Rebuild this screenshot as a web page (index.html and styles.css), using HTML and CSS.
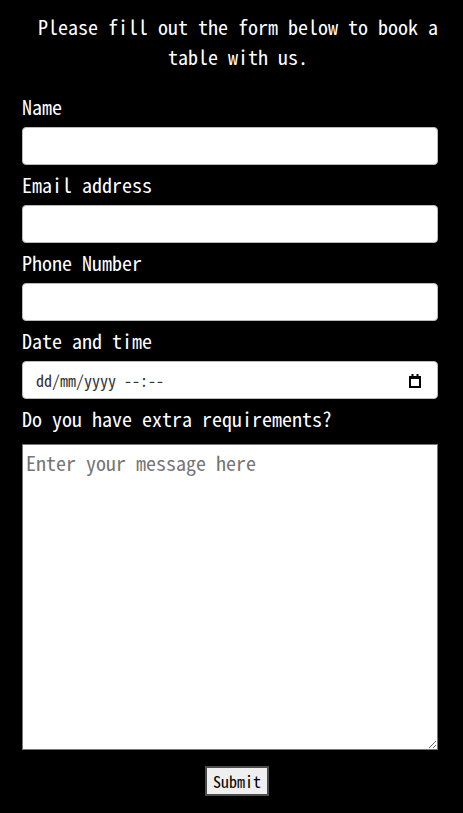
FILE: index.html
```html
<!DOCTYPE html>
<html lang="en">
<head>
<meta charset="utf-8">
<title>Book a table</title>
<link rel="stylesheet" href="styles.css">
</head>
<body>
<main class="page">
  <p class="intro">Please fill out the form below to book a table with us.</p>
  <form class="booking">
    <label class="field-label" for="name">Name</label>
    <input class="field" type="text" id="name">
    <label class="field-label" for="email">Email address</label>
    <input class="field" type="email" id="email">
    <label class="field-label" for="phone">Phone Number</label>
    <input class="field" type="tel" id="phone">
    <label class="field-label" for="when">Date and time</label>
    <div class="field field-date" id="when" role="textbox">
      <span class="date-text">dd/mm/yyyy --:--</span>
      <svg class="date-icon" width="12" height="14" viewBox="0 0 12 14" aria-hidden="true">
        <rect x="1" y="3" width="10" height="10" fill="none" stroke="#000" stroke-width="2"/>
        <rect x="0" y="2" width="12" height="3" fill="#000"/>
        <rect x="2.5" y="0" width="2" height="3" fill="#000"/>
        <rect x="7.5" y="0" width="2" height="3" fill="#000"/>
      </svg>
    </div>
    <label class="field-label field-label-message" for="msg">Do you have extra requirements?</label>
    <textarea class="message" id="msg" placeholder="Enter your message here"></textarea>
    <div class="actions">
      <button class="submit" type="submit">Submit</button>
    </div>
  </form>
</main>
</body>
</html>
```

FILE: styles.css
```css
html, body {
  margin: 0;
  padding: 0;
  background: #000;
}

body {
  color: #fff;
  font-family: "Noto Sans Mono CJK SC", "Noto Sans Mono CJK JP", "Liberation Mono", monospace;
}

.page {
  padding: 12px 25px 0 22px;
}

.intro {
  margin: 0 -1px 23px 15px;
  font-size: 20px;
  line-height: 30px;
  text-align: center;
}

.booking {
  display: flex;
  flex-direction: column;
  width: 416px;
}

.field-label {
  display: block;
  font-size: 20px;
  line-height: 24px;
  margin-bottom: 8px;
}

.field {
  box-sizing: border-box;
  height: 38px;
  width: 416px;
  margin: 0 0 8px;
  padding: 0 12px;
  border: 1px solid #bbb;
  border-radius: 4px;
  background: #fff;
  font-family: inherit;
  font-size: 16px;
  color: #000;
}

.field-date {
  display: flex;
  align-items: center;
  justify-content: space-between;
  padding: 0 16px 0 13px;
}

.date-text {
  color: #333;
  font-size: 16px;
  line-height: 20px;
}

.date-icon {
  display: block;
  margin-top: 1px;
}

.field-label-message {
  margin-bottom: 13px;
}

.message {
  box-sizing: border-box;
  width: 416px;
  height: 306px;
  margin: 0;
  padding: 6px 3px 2px;
  border: 1px solid #767676;
  border-radius: 0;
  background: #fff;
  font-family: inherit;
  font-size: 20px;
  line-height: 24px;
  resize: both;
}

.message::placeholder {
  color: #757575;
}

.actions {
  display: flex;
  justify-content: center;
  padding: 16px 0 0 14px;
}

.submit {
  box-sizing: border-box;
  width: 64px;
  height: 30px;
  padding: 0;
  border: 2px solid #4d4d4d;
  background: #efefef;
  color: #000;
  font-family: inherit;
  font-size: 16px;
}
```
